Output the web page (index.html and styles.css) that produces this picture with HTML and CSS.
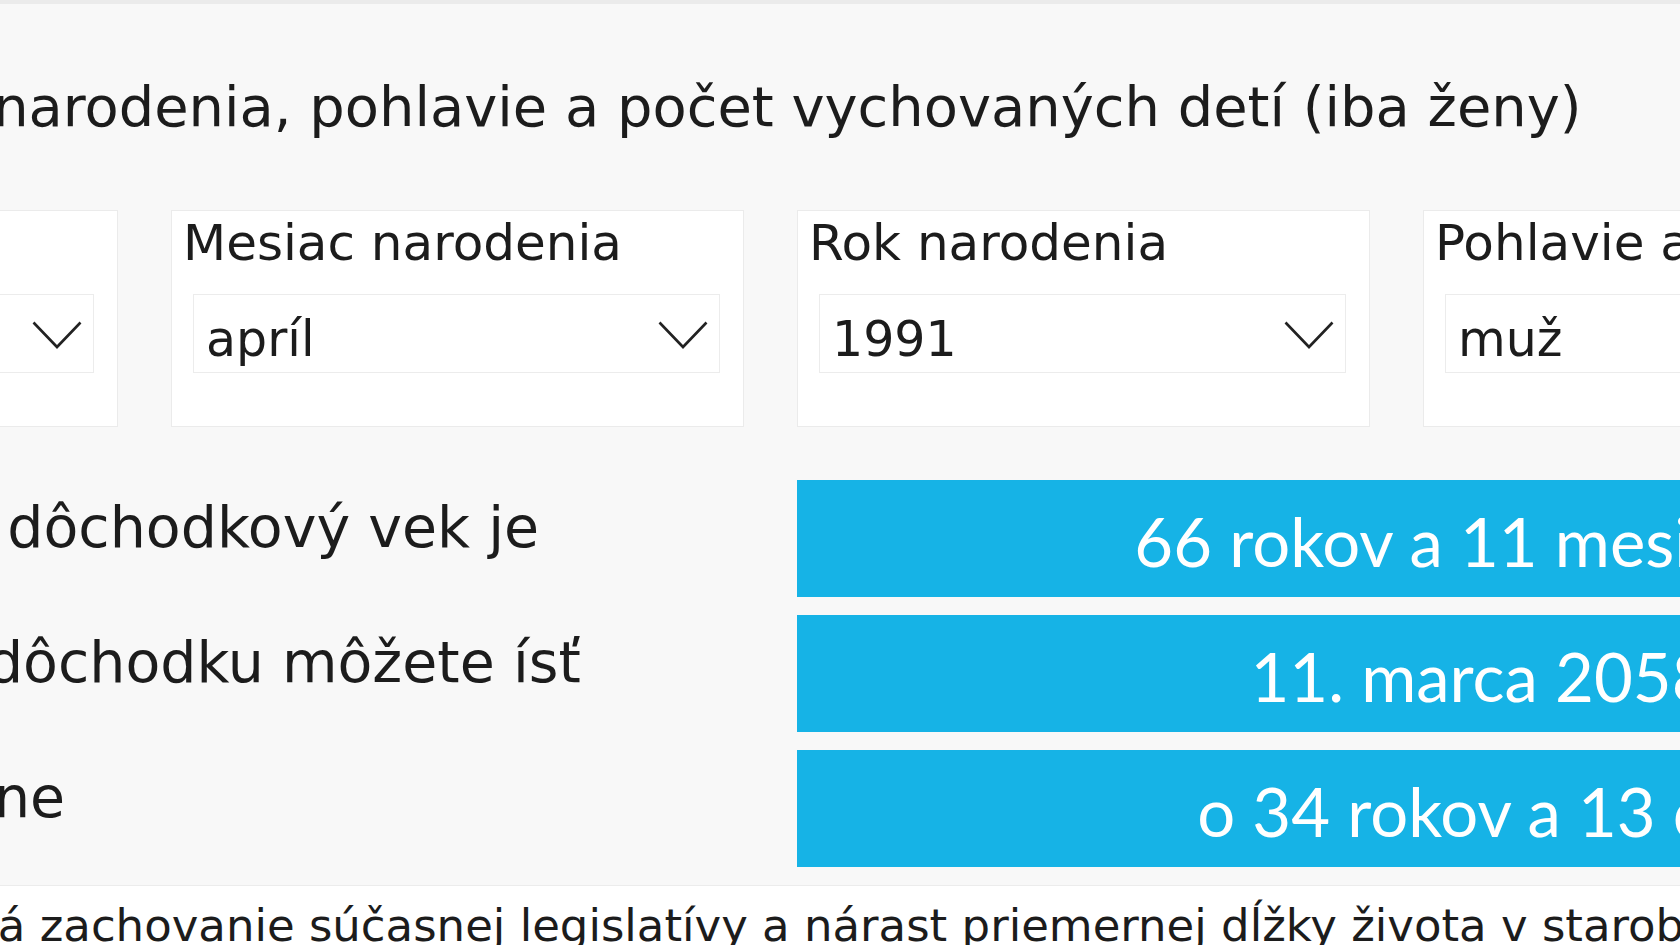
FILE: index.html
```html
<!DOCTYPE html>
<html lang="sk">
<head>
  <meta charset="UTF-8">
  <title>Dôchodková kalkulačka</title>
  <link rel="stylesheet" href="styles.css">
</head>
<body>
  <div class="topline"></div>
  <div class="page">
    <main class="calc">
      <h1 class="calc-title">Zadajte dátum narodenia, pohlavie a počet vychovaných detí (iba ženy)</h1>

      <div class="fields">
        <div class="field">
          <div class="field-label">Deň narodenia</div>
          <div class="select">
            <span class="select-value">11</span>
            <svg class="chevron" viewBox="0 0 50 28"><polyline points="1.5,1.5 25,26 48.5,1.5"/></svg>
          </div>
        </div>
        <div class="field">
          <div class="field-label">Mesiac narodenia</div>
          <div class="select">
            <span class="select-value">apríl</span>
            <svg class="chevron" viewBox="0 0 50 28"><polyline points="1.5,1.5 25,26 48.5,1.5"/></svg>
          </div>
        </div>
        <div class="field">
          <div class="field-label">Rok narodenia</div>
          <div class="select">
            <span class="select-value">1991</span>
            <svg class="chevron" viewBox="0 0 50 28"><polyline points="1.5,1.5 25,26 48.5,1.5"/></svg>
          </div>
        </div>
        <div class="field">
          <div class="field-label">Pohlavie a počet detí</div>
          <div class="select">
            <span class="select-value">muž</span>
            <svg class="chevron" viewBox="0 0 50 28"><polyline points="1.5,1.5 25,26 48.5,1.5"/></svg>
          </div>
        </div>
      </div>

      <div class="results">
        <div class="result">
          <div class="result-label">Váš dôchodkový vek je</div>
          <div class="result-value">66 rokov a 11 mesiacov</div>
        </div>
        <div class="result">
          <div class="result-label">Do dôchodku môžete ísť</div>
          <div class="result-value">11. marca 2058</div>
        </div>
        <div class="result">
          <div class="result-label">Jedine</div>
          <div class="result-value">o 34 rokov a 13 dní</div>
        </div>
      </div>
    </main>

    <footer class="note">
      <p>Výpočet predpokladá zachovanie súčasnej legislatívy a nárast priemernej dĺžky života v starobe.</p>
    </footer>
  </div>
</body>
</html>
```

FILE: styles.css
```css
html, body {
  margin: 0;
  height: 100%;
  overflow: hidden;
}
body {
  background: #f8f8f8;
  color: #1c1c1c;
  font-family: "DejaVu Sans", Verdana, sans-serif;
}
.topline {
  height: 4px;
  background: #ebebeb;
}
.page {
  margin-left: -455px;
  width: 2700px;
}

.calc-title {
  margin: 71px 0 71px 0;
  padding-left: 17px;
  font-size: 55.9px;
  font-weight: normal;
  line-height: 64px;
  white-space: nowrap;
}

.fields {
  display: grid;
  grid-template-columns: repeat(4, 573px);
  gap: 53px;
}
.field {
  box-sizing: border-box;
  height: 217px;
  padding: 2px 23px 0 11px;
  background: #fff;
  border: 1px solid #ebebeb;
}
.field-label {
  font-size: 50px;
  line-height: 60px;
  white-space: nowrap;
}
.select {
  box-sizing: border-box;
  display: flex;
  justify-content: space-between;
  align-items: flex-start;
  height: 79px;
  margin: 21px 0 0 10px;
  padding: 13px 11px 0 12px;
  background: #fff;
  border: 1px solid #ececec;
}
.select-value {
  font-size: 49px;
  line-height: 64px;
}
.chevron {
  width: 50px;
  height: 28px;
  margin-top: 13px;
  fill: none;
  stroke: #222;
  stroke-width: 2.6;
}

.results {
  display: flex;
  flex-direction: column;
  gap: 18px;
  margin-top: 53px;
}
.result {
  display: grid;
  grid-template-columns: 1252px 1367px;
  height: 117px;
}
.result-label {
  padding: 14px 0 0 345px;
  font-size: 57px;
  white-space: nowrap;
}
.result-value {
  box-sizing: border-box;
  padding-top: 6px;
  background: #16b3e6;
  color: #fff;
  font-family: Lato, "Open Sans", sans-serif;
  font-size: 67px;
  line-height: 111px;
  text-align: center;
  white-space: nowrap;
}

.note {
  margin-top: 18px;
  padding: 13px 0 0 3px;
  height: 200px;
  background: #fff;
  border-top: 1px solid #ececec;
}
.note p {
  margin: 0;
  font-size: 45px;
  white-space: nowrap;
}
```
